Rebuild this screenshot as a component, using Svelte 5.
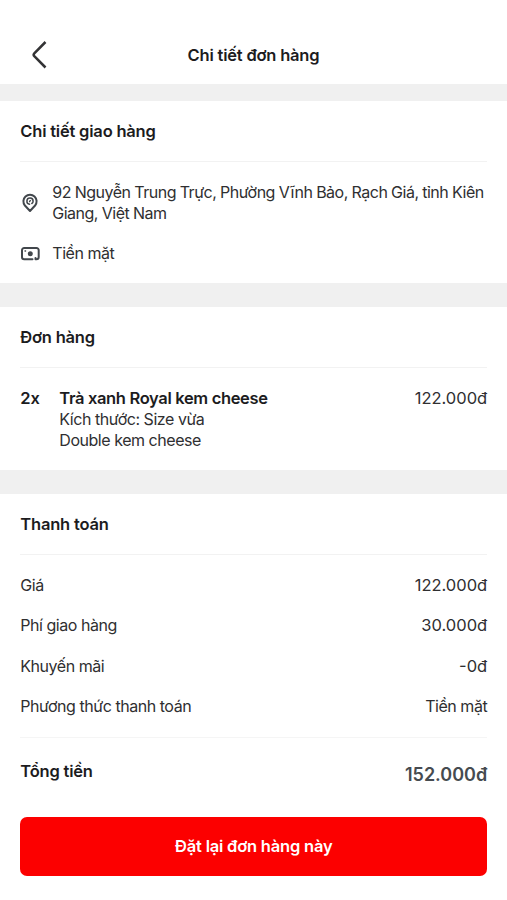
<script>
  const delivery = {
    address: "92 Nguyễn Trung Trực, Phường Vĩnh Bảo, Rạch Giá, tỉnh Kiên Giang, Việt Nam",
    method: "Tiền mặt"
  };

  const items = [
    {
      quantity: 2,
      name: "Trà xanh Royal kem cheese",
      options: ["Kích thước: Size vừa", "Double kem cheese"],
      price: "122.000đ"
    }
  ];

  const payment = [
    { label: "Giá", value: "122.000đ", money: true },
    { label: "Phí giao hàng", value: "30.000đ", money: true },
    { label: "Khuyến mãi", value: "-0đ", money: true },
    { label: "Phương thức thanh toán", value: "Tiền mặt" }
  ];

  const total = "152.000đ";
</script>

<div class="screen">
  <header>
    <button class="back" aria-label="Quay lại">
      <svg width="18" height="30" viewBox="0 0 18 30" fill="none">
        <path d="M15.500 2 4.300 13.300q-1.300 1.400 0 2.800L15.500 27.500" stroke="#333335" stroke-width="2.500" stroke-linejoin="round" />
      </svg>
    </button>
    <h1>Chi tiết đơn hàng</h1>
  </header>

  <section class="delivery">
    <h2>Chi tiết giao hàng</h2>
    <div class="info address">
      <svg width="20" height="20" viewBox="0 0 20 20" fill="none" stroke="#42474c" stroke-width="2" stroke-linecap="round" stroke-linejoin="round">
        <path d="M10 18 4.900 12.500A6.600 6.600 0 1 1 15.100 12.500Z" />
        <path d="M9.600 11.200A3.100 3.100 0 1 1 13.100 8.200q0 1.600-1.300 2.300" stroke-width="1.500" />
        <path d="M9.500 8.700q0-1 1-1" stroke-width="1.300" />
      </svg>
      <p>{delivery.address}</p>
    </div>
    <div class="info">
      <svg width="20" height="20" viewBox="0 0 20 20" fill="none" stroke="#42474c" stroke-width="2" stroke-linecap="round" stroke-linejoin="round">
        <path d="M12.500 15.300H4.200a2.200 2.200 0 0 1-2.200-2.200V6.200A2.200 2.200 0 0 1 4.200 4h12.300A2.200 2.200 0 0 1 18.700 6.200v6.900a2.200 2.200 0 0 1-2.200 2.200h-1v-1.300" />
        <circle cx="10.300" cy="9.800" r="1.500" fill="#42474c" />
        <path d="M5 7h.600" stroke-width="1.300" />
      </svg>
      <p>{delivery.method}</p>
    </div>
  </section>

  <section class="order">
    <h2>Đơn hàng</h2>
    {#each items as item}
      <div class="item">
        <strong>{item.quantity}x</strong>
        <div class="item-body">
          <strong class="name">{item.name}</strong>
          {#each item.options as option}
            <p>{option}</p>
          {/each}
        </div>
        <span class="money">{item.price}</span>
      </div>
    {/each}
  </section>

  <section class="payment">
    <h2>Thanh toán</h2>
    <div class="rows">
      {#each payment as row}
        <div class="row">
          <span>{row.label}</span>
          <span class:money={row.money}>{row.value}</span>
        </div>
      {/each}
    </div>
    <div class="total">
      <strong>Tổng tiền</strong>
      <strong class="amount">{total}</strong>
    </div>
    <button class="reorder">Đặt lại đơn hàng này</button>
  </section>
</div>

<style>
  :global(body) {
    margin: 0;
    background: #fff;
  }

  .screen {
    height: 900px;
    box-sizing: border-box;
    font-family: Inter, "Liberation Sans", sans-serif;
    font-size: 16px;
    line-height: 21px;
    letter-spacing: -0.46px;
    color: #2f2f31;
    background: #fff;
    overflow: hidden;
  }

  header {
    height: 84px;
    box-sizing: border-box;
    padding: 26px 20px 0;
    display: grid;
    grid-template-columns: 40px 1fr 40px;
    align-items: center;
  }

  .back {
    display: flex;
    padding: 0 0 0 10px;
    border: 0;
    background: none;
  }

  h1,
  h2,
  p {
    margin: 0;
  }

  h1,
  h2,
  strong {
    font-size: 16.5px;
    font-weight: 600;
    letter-spacing: -0.2px;
    color: #1c1c1e;
  }

  h1 {
    line-height: 21px;
    text-align: center;
  }

  h2 {
    height: 60px;
    line-height: 60px;
    border-bottom: 1px solid #f2f2f2;
  }

  section {
    box-sizing: border-box;
    padding: 0 19.8px 0 20.3px;
    border-top: 24px solid #f0f0f0;
  }

  .delivery {
    height: 199px;
    border-top-width: 17px;
  }

  .order {
    height: 187px;
  }

  .info {
    display: flex;
    align-items: center;
    gap: 12px;
  }

  .info svg {
    flex: none;
  }

  .address {
    margin: 20px 0 19px;
    letter-spacing: -0.5px;
    word-spacing: -0.25px;
  }

  .item {
    display: grid;
    grid-template-columns: 39px 1fr auto;
    padding-top: 20px;
  }

  .item-body {
    display: flex;
    flex-direction: column;
  }

  .name {
    letter-spacing: -0.34px;
  }

  .money {
    font-size: 16.5px;
    letter-spacing: 0;
  }

  .rows {
    padding: 10px 0 11px;
    border-bottom: 1px solid #f5f5f5;
  }

  .row {
    display: flex;
    justify-content: space-between;
    height: 40.3px;
    line-height: 40.3px;
  }

  .total {
    display: flex;
    justify-content: space-between;
    padding-top: 23px;
    height: 56px;
  }

  .amount {
    padding-top: 3px;
    font-size: 18px;
    letter-spacing: 0;
    color: #464b50;
  }

  .reorder {
    display: block;
    width: 100%;
    height: 59px;
    border: 0;
    border-radius: 7px;
    background: #fc0000;
    color: #fff;
    font: inherit;
    font-size: 16.5px;
    font-weight: 600;
    letter-spacing: -0.2px;
  }
</style>
